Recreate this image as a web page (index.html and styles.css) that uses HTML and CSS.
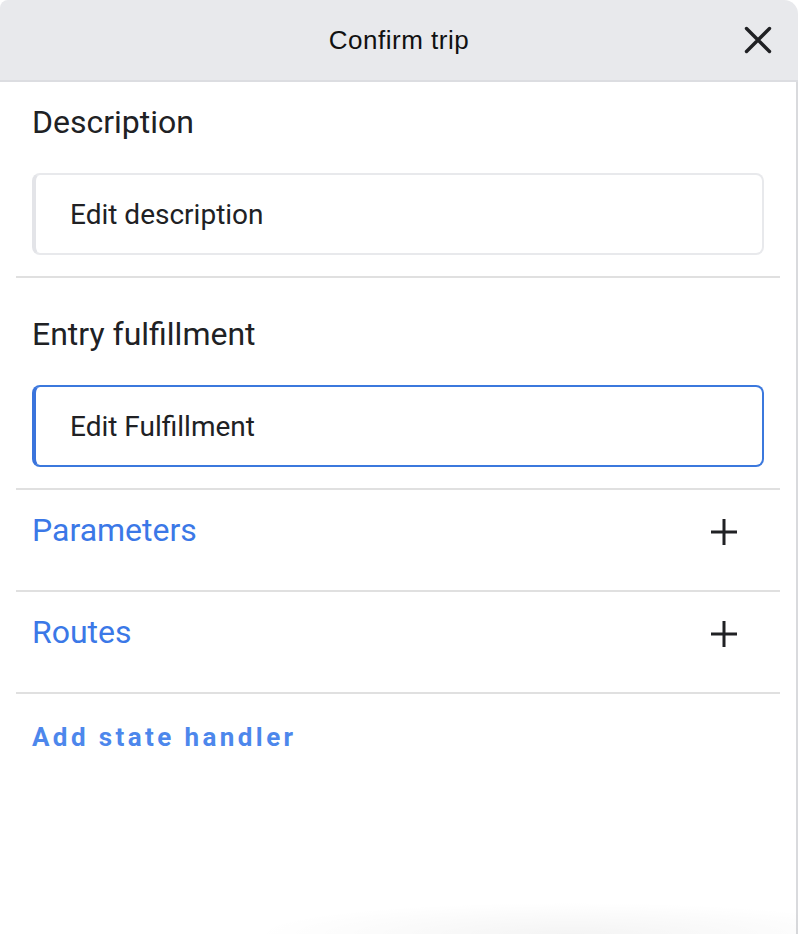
FILE: index.html
```html
<!DOCTYPE html>
<html lang="en">
<head>
<meta charset="utf-8">
<title>Confirm trip</title>
<link rel="stylesheet" href="styles.css">
</head>
<body>
<div class="panel">
  <header class="header">
    <span class="spacer"></span>
    <h1 class="title">Confirm trip</h1>
    <div class="header-actions">
      <button class="icon-btn" aria-label="Close">
        <svg width="28" height="28" viewBox="0 0 28 28"><path d="M2.5 2.5 L25.5 25.5 M25.5 2.5 L2.5 25.5" stroke="#202124" stroke-width="3.4" stroke-linecap="round" fill="none"/></svg>
      </button>
    </div>
  </header>
  <main class="content">
    <section class="section first">
      <h2 class="section-title">Description</h2>
      <div class="field">Edit description</div>
    </section>
    <section class="section">
      <h2 class="section-title">Entry fulfillment</h2>
      <div class="field active">Edit Fulfillment</div>
    </section>
    <div class="row">
      <span class="row-title">Parameters</span>
      <button class="icon-btn" aria-label="Add parameter">
        <svg width="28" height="28" viewBox="0 0 28 28"><path d="M14 1 V27 M1 14 H27" stroke="#202124" stroke-width="3" fill="none"/></svg>
      </button>
    </div>
    <div class="row">
      <span class="row-title">Routes</span>
      <button class="icon-btn" aria-label="Add route">
        <svg width="28" height="28" viewBox="0 0 28 28"><path d="M14 1 V27 M1 14 H27" stroke="#202124" stroke-width="3" fill="none"/></svg>
      </button>
    </div>
    <div class="add-row">
      <button class="text-btn">Add state handler</button>
    </div>
  </main>
</div>
</body>
</html>
```
FILE: styles.css
```css
html, body {
  margin: 0;
  padding: 0;
  background: #ffffff;
}

body {
  font-family: Roboto, "Noto Sans", Arial, sans-serif;
  color: #202124;
}

.panel {
  position: relative;
  min-height: 934px;
  display: flex;
  flex-direction: column;
  box-sizing: border-box;
}

.panel::after {
  content: "";
  position: absolute;
  left: 230px;
  right: 0;
  bottom: 0;
  height: 40px;
  background: radial-gradient(ellipse 70% 100% at 60% 100%, rgba(0,0,0,0.045), rgba(0,0,0,0) 80%);
  pointer-events: none;
}

.header {
  height: 80px;
  background: #e8e9ec;
  border-bottom: 2px solid #dcdde1;
  border-radius: 8px 14px 0 0;
  display: grid;
  grid-template-columns: 1fr auto 1fr;
  align-items: center;
}

.title {
  margin: 0;
  font-family: "Liberation Sans", Arial, sans-serif;
  font-weight: 400;
  font-size: 26px;
  letter-spacing: 0.5px;
  color: #111111;
}

.header-actions {
  display: flex;
  justify-content: flex-end;
  padding-right: 16px;
}

.icon-btn {
  width: 48px;
  height: 48px;
  padding: 0;
  border: 0;
  background: transparent;
  display: flex;
  align-items: center;
  justify-content: center;
  cursor: pointer;
}

.content {
  flex: 1;
  border-right: 2px solid #d9dadd;
  padding: 0 16px;
  display: flex;
  flex-direction: column;
}

.section {
  padding: 36px 16px 21px;
  border-bottom: 2px solid #e0e0e0;
  display: flex;
  flex-direction: column;
  gap: 31px;
}

.section.first {
  padding-top: 20px;
}

.section-title {
  margin: 0;
  font-size: 32px;
  line-height: 40px;
  font-weight: 400;
  color: #202124;
}

.field {
  height: 82px;
  box-sizing: border-box;
  border: 2px solid #e8e9ec;
  border-left: 4px solid #e3e4e8;
  border-radius: 8px;
  padding-left: 34px;
  display: flex;
  align-items: center;
  font-size: 28px;
  color: #202124;
}

.field.active {
  border-color: #3b78dd;
  border-left-color: #3a74dc;
}

.row {
  height: 102px;
  box-sizing: border-box;
  padding: 20px 32px 0 16px;
  border-bottom: 2px solid #e0e0e0;
  display: flex;
  justify-content: space-between;
  align-items: flex-start;
}

.row-title {
  font-size: 32px;
  line-height: 40px;
  color: #3b78e7;
}

.row .icon-btn {
  margin-top: -2px;
}

.add-row {
  padding: 27px 16px 0;
}

.text-btn {
  padding: 0;
  border: 0;
  background: transparent;
  font-family: Roboto, "Noto Sans", Arial, sans-serif;
  font-size: 26px;
  line-height: 32px;
  font-weight: 700;
  letter-spacing: 3.4px;
  color: #4d87ec;
  cursor: pointer;
}
```
